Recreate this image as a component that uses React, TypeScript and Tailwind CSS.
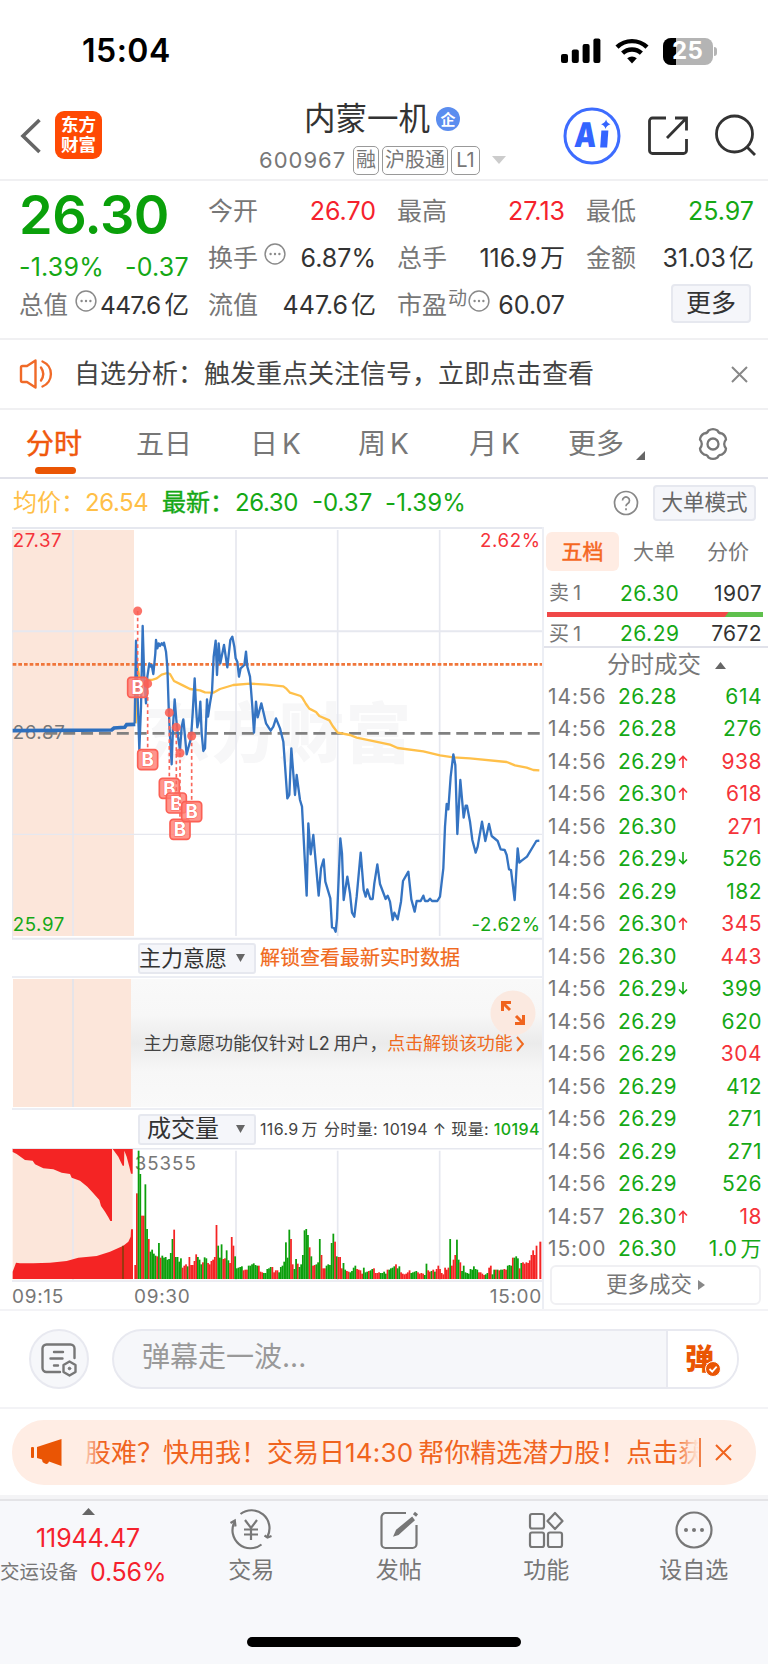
import type { ReactNode } from "react";
import clsx from "clsx";

const FONT = "font-['Inter','Noto_Sans_CJK_SC',sans-serif]";

type Trade = { time: string; price: string; dir?: "up" | "down"; vol: string; red?: boolean };

const trades: Trade[] = [
  { time: "14:56", price: "26.28", vol: "614" },
  { time: "14:56", price: "26.28", vol: "276" },
  { time: "14:56", price: "26.29", dir: "up", vol: "938", red: true },
  { time: "14:56", price: "26.30", dir: "up", vol: "618", red: true },
  { time: "14:56", price: "26.30", vol: "271", red: true },
  { time: "14:56", price: "26.29", dir: "down", vol: "526" },
  { time: "14:56", price: "26.29", vol: "182" },
  { time: "14:56", price: "26.30", dir: "up", vol: "345", red: true },
  { time: "14:56", price: "26.30", vol: "443", red: true },
  { time: "14:56", price: "26.29", dir: "down", vol: "399" },
  { time: "14:56", price: "26.29", vol: "620" },
  { time: "14:56", price: "26.29", vol: "304", red: true },
  { time: "14:56", price: "26.29", vol: "412" },
  { time: "14:56", price: "26.29", vol: "271" },
  { time: "14:56", price: "26.29", vol: "271" },
  { time: "14:56", price: "26.29", vol: "526" },
  { time: "14:57", price: "26.30", dir: "up", vol: "18", red: true },
  { time: "15:00", price: "26.30", vol: "1.0万" },
];

// chart data, 3 units per pixel
const preLine = "38,632 335,630 342,624 374,622 380,614 406,613";
const priceLine =
  "404,610 408,362 411,470 418,690 423,560 428,318 433,480 438,550 442,470 448,430 452,440 455,435 460,462 466,400 468,360 472,385 476,370 480,378 485,370 490,376 492,368 498,395 502,440 506,560 510,650 515,733 519,620 524,538 529,600 534,650 540,690 545,620 550,598 555,650 560,703 566,680 573,655 578,580 584,475 588,560 592,622 597,600 601,545 605,640 610,693 615,685 621,538 624,590 630,550 636,515 641,410 647,362 651,465 656,370 661,430 672,375 682,442 691,360 697,350 703,380 707,415 712,425 717,470 722,445 733,435 738,395 742,440 750,470 757,560 762,638 768,545 773,592 784,550 798,610 812,632 820,620 828,595 840,625 850,665 862,835 868,825 874,685 885,825 890,765 900,840 906,860 920,1127 925,910 932,1003 940,945 956,1127 963,1045 971,1018 976,1085 991,1135 996,1222 1002,1224 1007,1235 1011,1195 1021,955 1026,1000 1031,1140 1042,1070 1050,1120 1056,1178 1063,1190 1070,1130 1082,998 1091,1110 1097,1130 1102,1108 1111,1137 1118,1137 1123,1090 1132,1033 1140,1092 1157,1137 1163,1127 1170,1145 1178,1200 1183,1178 1193,1198 1203,1145 1209,1083 1225,1055 1234,1138 1244,1175 1250,1143 1262,1143 1270,1127 1275,1143 1284,1143 1290,1136 1296,1143 1312,1143 1320,1130 1330,1045 1335,920 1340,852 1345,868 1352,770 1360,703 1366,735 1372,942 1381,780 1391,893 1397,857 1401,857 1410,905 1417,960 1427,998 1433,980 1446,905 1456,963 1467,912 1475,948 1493,963 1502,988 1514,990 1520,1005 1527,1048 1533,1050 1544,1140 1553,985 1558,1028 1565,1022 1581,1010 1609,963 1618,962";
const avgLine =
  "407,610 410,560 413,440 418,470 430,480 455,480 470,475 485,464 502,459 510,462 522,483 550,497 570,507 600,511 615,517 640,518 660,507 700,495 750,491 800,494 850,499 858,505 870,518 902,528 908,535 918,552 928,566 948,576 958,588 988,601 998,618 1013,638 1050,645 1070,653 1170,674 1193,684 1270,694 1320,706 1360,712 1410,715 1520,726 1545,736 1580,743 1600,750 1618,751";

const marks = [
  { x: 413, y: 273, b: 502 },
  { x: 443, y: 491, b: 719 },
  { x: 508, y: 578, b: 805 },
  { x: 529, y: 622, b: 849 },
  { x: 540, y: 699, b: 928 },
  { x: 575, y: 648, b: 875 },
];

const volume =
  "r42 r257 g385 g315 r190 r190 g284 g150 r120 g82 g88 g76 g70 r68 g108 r64 g70 g64 g66 g58 g60 g78 g120 r148 g66 g66 g52 g62 r34 r40 r44 g38 r66 r42 r42 r54 r74 g66 g58 g44 r50 g65 g62 r48 r44 r54 r58 r66 r162 g100 g64 g104 r60 r62 g86 g56 r48 r126 r100 g68 g32 g34 g36 g38 r26 r28 r28 g40 g40 g44 g47 g42 g40 r40 " +
  "r22 r20 g18 g18 g30 g32 g36 r36 r20 r26 r26 g20 g36 g40 g52 g110 g64 g148 r120 r44 g30 g60 r46 g36 g44 g72 g146 g150 g132 r95 g68 r40 r42 g44 g50 g120 r72 r32 r32 g40 g44 g42 g108 g136 r112 g68 r66 r66 r32 g48 g28 r24 r22 g20 g24 g34 g40 r30 r28 r26 r16 g34 g20 g22 r24 g26 g30 r32 r18 r18 r20 g18 g18 g22 g16 r28 g28 g32 g34 g38 r44 g32 g38 r20 r16 r14 r16 r20 r26 g18 g20 g22 g24 r20 r16 r18 r16 g12 g46 r26 r22 g24 r28 g22 r30 r40 r30 r18 r14 r34 r28 r34 g120 r40 r58 r72 g118 g58 r50 g24 g40 g20 g18 g16 g30 g28 g38 g30 g28 r20 r20 r16 r12 g14 g18 r34 r40 g14 g28 r28 g28 r26 g28 g28 r30 r28 g40 g42 g40 r64 g64 g68 g62 r32 g48 r50 r46 r50 r48 r56 r72 r86 r72 r100";

const bars = volume.split(" ");

function Dots({ className }: { className?: string }) {
  return (
    <svg viewBox="0 0 24 24" fill="none" stroke="#8a8a8a" strokeWidth="1.6" className={clsx("shrink-0", className)}>
      <circle cx="12" cy="12" r="10.8" />
      <g fill="#8a8a8a" stroke="none">
        <circle cx="7.2" cy="12" r="1.3" />
        <circle cx="12" cy="12" r="1.3" />
        <circle cx="16.8" cy="12" r="1.3" />
      </g>
    </svg>
  );
}

function StatusBar() {
  return (
    <div className="flex h-[90px] items-center pt-[12px] pr-[51px] pl-[82px]">
      <span className="flex-1 text-[32px] leading-none font-semibold tracking-[0.5px] text-black">15:04</span>
      <svg width="40" height="26" viewBox="0 0 40 26" className="mr-[14px]">
        <rect x="0" y="16" width="7" height="9" rx="2" />
        <rect x="10.8" y="11.5" width="7" height="13.5" rx="2" />
        <rect x="21.6" y="6" width="7" height="19" rx="2" />
        <rect x="32.4" y="0.5" width="7" height="24.5" rx="2" />
      </svg>
      <svg width="34" height="26" viewBox="0 0 34 26" fill="none" stroke="#000" strokeWidth="4.4" className="mr-[14px]">
        <path d="M2 9.2a21.5 21.5 0 0 1 30 0" />
        <path d="M7.6 15.2a13.6 13.6 0 0 1 18.8 0" />
        <path d="M17 25.5l-4.8-5.2a7 7 0 0 1 9.6 0z" fill="#000" stroke="none" />
      </svg>
      <div className="relative flex h-[27px] w-[50px] items-center justify-center overflow-hidden rounded-[8px] bg-[#b4b4b4]">
        <span className="absolute inset-y-0 left-0 w-[13px] bg-black" />
        <span className="relative text-[24px] leading-none font-bold tracking-[0.2px] text-white">25</span>
      </div>
      <span className="ml-[1.5px] h-[9px] w-[3px] rounded-r-full bg-[#b4b4b4]" />
    </div>
  );
}

function Tag({ children, className }: { children: ReactNode; className?: string }) {
  return (
    <span
      className={clsx(
        "flex h-[29px] items-center justify-center rounded-[5px] border-[1.5px] border-[#999] text-[20px] leading-none text-[#777]",
        className
      )}
    >
      {children}
    </span>
  );
}

function Header() {
  return (
    <header className="flex h-[91px] items-start border-b-2 border-[#f0f0f2] pl-[20px]">
      <svg width="22" height="36" viewBox="0 0 22 36" fill="none" stroke="#666" strokeWidth="3.6" className="mt-[28px]">
        <path d="M19.5 2L3 18l16.500 16" />
      </svg>
      <div className="mt-[21px] ml-[13px] flex h-[48px] w-[47px] flex-col items-center justify-center rounded-[9px] bg-[#ff4a04] text-[17.500px] leading-[20px] font-bold text-white">
        <span>东方</span>
        <span>财富</span>
      </div>
      <div className="ml-[157px] flex w-[248px] flex-col">
        <div className="mt-[12px] ml-[45px] flex h-[34px] items-center">
          <span className="text-[31.500px] leading-none text-[#333]">内蒙一机</span>
          <span className="ml-[6px] flex h-[24px] w-[24px] items-center justify-center rounded-full bg-[#5b8def] text-[15px] leading-none font-bold text-white">
            企
          </span>
        </div>
        <div className="mt-[9px] flex h-[30px] items-center">
          <span className="w-[94px] text-[22px] leading-none tracking-[1px] text-[#777]">600967</span>
          <Tag className="w-[26px]">融</Tag>
          <Tag className="ml-[3px] w-[66px]">沪股通</Tag>
          <Tag className="ml-[3px] w-[29px]">L1</Tag>
          <svg width="14" height="8" viewBox="0 0 14 8" className="ml-[12px]">
            <path d="M0 0h14L7 8z" fill="#ccc" />
          </svg>
        </div>
      </div>
      <svg width="58" height="58" viewBox="0 0 58 58" className="mt-[17px] ml-[56px]">
        <circle cx="29" cy="29" r="27" fill="none" stroke="#3d6cff" strokeWidth="3" />
        <g fill="#3464ff" transform="skewX(-4) translate(2.500 0)">
          <text x="11" y="40.500" fontSize="34" fontWeight="900" textLength="22" lengthAdjust="spacingAndGlyphs">
            A
          </text>
          <path d="M37.500 23.500h7v17h-7z" />
          <path d="M41.500 12.500q1 3.800 4.700 4.800-3.700 1-4.700 4.800-1-3.800-4.700-4.800 3.700-1 4.700-4.800z" />
        </g>
      </svg>
      <svg width="42" height="42" viewBox="0 0 42 42" fill="none" stroke="#333" strokeWidth="2.8" className="mt-[25px] ml-[26px]">
        <path d="M19 3H5.500a3 3 0 0 0-3 3v29.500a3 3 0 0 0 3 3h31a3 3 0 0 0 3-3V24" />
        <path d="M28 3h11.500v12.500M39 3.500L20 23" />
      </svg>
      <svg width="44" height="44" viewBox="0 0 44 44" fill="none" stroke="#333" strokeWidth="2.8" className="mt-[24px] ml-[25px]">
        <circle cx="20.500" cy="20" r="18" />
        <path d="M32.500 32.500l8.500 8.500" />
      </svg>
    </header>
  );
}

type Quote = { label: string; value: string; unit?: string; color?: string; dots?: boolean };

function QuoteCell({ label, value, unit, color = "text-[#333]", dots }: Quote) {
  return (
    <div className="flex h-[47px] w-[168px] items-center text-[25px] leading-none">
      <span className="text-[#777]">{label}</span>
      {dots && <Dots className="-mt-[10px] ml-[6px] h-[22px] w-[22px]" />}
      <span className={clsx("ml-auto", color)}>{value}</span>
      {unit && <span className={clsx("ml-[3px]", color)}>{unit}</span>}
    </div>
  );
}

function QuotePanel() {
  return (
    <section className="flex h-[159px] border-b-2 border-[#f0f0f2] pl-[19px]">
      <div className="w-[189px]">
        <div className="mt-[7px] h-[54px] text-[54px] leading-[54px] font-semibold tracking-[-0.5px] text-[#0aa00a]">26.30</div>
        <div className="mt-[12px] flex h-[26px] items-center text-[25px] leading-none tracking-[0.2px] text-[#15a815]">
          <span className="w-[106px]">-1.39%</span>
          <span>-0.37</span>
        </div>
        <div className="mt-[2px] flex h-[47px] items-center text-[24.500px] leading-none">
          <span className="text-[#777]">总值</span>
          <Dots className="-mt-[10px] ml-[7px] h-[22px] w-[22px]" />
          <span className="ml-[3px] tracking-[-0.7px] text-[#333]">447.6</span>
          <span className="ml-[4px] text-[#333]">亿</span>
        </div>
      </div>
      <div className="flex flex-col pt-[7px]">
        <div className="flex gap-[21px]">
          <QuoteCell label="今开" value="26.70" color="text-[#f5222d]" />
          <QuoteCell label="最高" value="27.13" color="text-[#f5222d]" />
          <QuoteCell label="最低" value="25.97" color="text-[#15a815]" />
        </div>
        <div className="flex gap-[21px]">
          <QuoteCell label="换手" value="6.87%" dots />
          <QuoteCell label="总手" value="116.9" unit="万" />
          <QuoteCell label="金额" value="31.03" unit="亿" />
        </div>
        <div className="flex gap-[21px]">
          <QuoteCell label="流值" value="447.6" unit="亿" />
          <div className="flex h-[47px] w-[168px] items-center text-[25px] leading-none">
            <span className="text-[#777]">市盈</span>
            <span className="-mt-[14px] ml-px text-[19px] text-[#777]">动</span>
            <Dots className="-mt-[10px] ml-[1px] h-[22px] w-[22px]" />
            <span className="ml-auto text-[#333]">60.07</span>
          </div>
          <div className="flex h-[47px] w-[165px] items-center justify-end">
            <button className="mt-[-4px] flex h-[39px] w-[80px] items-center justify-center rounded-[4px] border-2 border-[#e6e8ef] bg-[#f5f6fa] text-[25px] leading-none text-[#333]">
              更多
            </button>
          </div>
        </div>
      </div>
    </section>
  );
}

function Notice() {
  return (
    <section className="flex h-[70px] items-center border-b-2 border-[#f0f0f2] pl-[19px]">
      <svg width="36" height="30" viewBox="0 0 36 30" fill="none" stroke="#f06a28" strokeWidth="2.4" strokeLinejoin="round">
        <path d="M2 8.500v13a1.500 1.500 0 0 0 1.500 1.500H8l8.500 5.500V1.500L8 7H3.500A1.500 1.500 0 0 0 2 8.500z" />
        <path d="M22 8.500q4.500 6.500 0 13M23.500 2.500a13.500 13.500 0 0 1 0 25" strokeLinecap="round" />
      </svg>
      <span className="ml-[19px] text-[26px] leading-none text-[#444]">自选分析：触发重点关注信号，立即点击查看</span>
      <svg width="17" height="17" viewBox="0 0 17 17" stroke="#888" strokeWidth="2" className="ml-auto mr-[20px]">
        <path d="M1 1l15 15M16 1L1 16" />
      </svg>
    </section>
  );
}

function Tabs() {
  return (
    <nav className="flex h-[69px] border-b-2 border-[#e1e2ea] text-[28px] leading-none text-[#777]">
      <div className="ml-[26px] flex w-[110px] flex-col">
        <span className="mt-[20px] text-[#f0580c] [-webkit-text-stroke:0.5px]">分时</span>
        <span className="mt-[9px] ml-[8.500px] h-[7px] w-[41px] rounded-full bg-[#ea5504]" />
      </div>
      <span className="mt-[20px] w-[114px]">五日</span>
      <span className="mt-[20px] w-[108px]">日<span className="ml-[4px]">K</span></span>
      <span className="mt-[20px] w-[111px]">周<span className="ml-[4px]">K</span></span>
      <span className="mt-[20px] w-[99px]">月<span className="ml-[4px]">K</span></span>
      <span className="mt-[20px]">更多</span>
      <svg width="9" height="9" viewBox="0 0 9 9" className="mt-[41px] ml-[12px]">
        <path d="M9 0v9H0z" fill="#666" />
      </svg>
      <svg width="34" height="34" viewBox="0 0 34 34" fill="none" stroke="#777" strokeWidth="2.300" strokeLinejoin="round" className="mt-[17px] ml-[51px]">
        <path d="M12.500 3.500q4.500-2.800 9 0 1 2.800 4.200 2.900 4 2 4.300 6.200-1.800 2.200-1.800 4.400t1.800 4.400q-.3 4.200-4.300 6.200-3.200.1-4.200 2.900-4.500 2.800-9 0-1-2.800-4.200-2.900-4-2-4.300-6.200 1.800-2.200 1.800-4.400t-1.800-4.400q.3-4.200 4.300-6.200 3.200-.1 4.200-2.900z" />
        <circle cx="17" cy="17" r="5.500" />
      </svg>
    </nav>
  );
}

function Legend() {
  return (
    <div className="flex h-[48px] items-center pl-[13px] text-[24px] leading-none text-[#15a815]">
      <span className="w-[72px] text-[#ffbf47]">均价：</span>
      <span className="w-[77px] tracking-[-0.4px] text-[#ffbf47]">26.54</span>
      <span className="w-[73px] [-webkit-text-stroke:0.4px]">最新：</span>
      <span className="w-[77px] tracking-[-0.4px]">26.30</span>
      <span className="w-[73px]">-0.37</span>
      <span className="tracking-[0.1px]">-1.39%</span>
      <svg width="26" height="26" viewBox="0 0 26 26" fill="none" stroke="#888" strokeWidth="1.700" className="ml-auto">
        <circle cx="13" cy="13" r="11.500" />
        <path d="M9.500 10.500a3.500 3.500 0 1 1 5.300 3q-1.800 1-1.800 2.800M13 18.200v2" />
      </svg>
      <button className="mr-[12px] ml-[14px] flex h-[36px] w-[103px] items-center justify-center rounded-[4px] border-2 border-[#e6e8ef] bg-[#f5f6fa] text-[21.500px] leading-none text-[#666]">
        大单模式
      </button>
    </div>
  );
}

function PriceChart() {
  return (
    <svg width="530" height="413" viewBox="36 21 1590 1239" className="block text-[56px]">
      <rect x="38" y="30" width="364" height="1218" fill="#fce6da" />
      <text x="434" y="710" fontSize="196" fontWeight="900" fill="#f7f7f8" letterSpacing="5">
        东方财富
      </text>
      <g stroke="#e6e8ef" strokeWidth="6">
        <path d="M36 24H1626M36 334H1626M36 1256H1626" />
        <path d="M36 943H1626" strokeWidth="4" />
        <path d="M219 30V1248M708 30V1248M1013 30V1248M1319 30V1248" strokeWidth="5" />
        <path d="M38 30V1256" strokeWidth="3" />
      </g>
      <path d="M38 433H1626" stroke="#f0763a" strokeWidth="8" strokeDasharray="11 6" />
      <text x="38" y="658" fill="#777" letterSpacing="2">26.87</text>
      <path d="M136 640H1620" stroke="#808080" strokeWidth="8" strokeDasharray="36 17.600" />
      <polyline points={avgLine} fill="none" stroke="#ffc04a" strokeWidth="7" strokeLinejoin="round" />
      <polyline points={preLine} fill="none" stroke="#2d6fbe" strokeWidth="11" />
      <polyline points={priceLine} fill="none" stroke="#3574c2" strokeWidth="7" strokeLinejoin="round" />
      {marks.map((m) => (
        <g key={m.x}>
          <path d={`M${m.x} ${m.y}V${m.b - 30}`} stroke="#f9665a" strokeWidth="5" strokeDasharray="11 9" />
          <rect x={m.x - 30} y={m.b - 30} width="60" height="60" rx="10" fill="#ff7c70" fillOpacity="0.8" stroke="#fb6055" strokeWidth="5" />
          <text x={m.x} y={m.b + 20} textAnchor="middle" fontSize="56" fontWeight="700" fill="#fff" stroke="#fb6055" strokeWidth="3" paintOrder="stroke">
            B
          </text>
        </g>
      ))}
      {marks.map((m) => (
        <circle key={m.x} cx={m.x} cy={m.y} r="13.500" fill="#fa6054" fillOpacity="0.88" />
      ))}
      <g letterSpacing="1.800">
        <text x="38" y="81" fill="#f5333a">27.37</text>
        <text x="38" y="1233" fill="#15a815">25.97</text>
        <text x="1622" y="81" textAnchor="end" fill="#f5333a">2.62%</text>
        <text x="1622" y="1233" textAnchor="end" fill="#15a815">-2.62%</text>
      </g>
    </svg>
  );
}

function Picker({ children, className }: { children: ReactNode; className?: string }) {
  return (
    <button
      className={clsx(
        "ml-[126px] flex h-[31px] w-[118px] shrink-0 items-center rounded-[3px] border-2 border-[#e6e8ef] bg-[#f5f6fa] leading-none text-[#333]",
        className
      )}
    >
      {children}
      <svg width="9" height="8" viewBox="0 0 9 8" className="mr-[9px] ml-auto">
        <path d="M0 0h9L4.500 8z" fill="#666" />
      </svg>
    </button>
  );
}

function IntentPanel() {
  return (
    <div>
      <div className="flex h-[36px] items-center">
        <Picker className="text-[22px]"><span className="-ml-px">主力意愿</span></Picker>
        <span className="ml-[4px] text-[20px] leading-none text-[#f06a20] [-webkit-text-stroke:0.2px]">解锁查看最新实时数据</span>
      </div>
      <div className="flex h-[134px] border-y-2 border-[#eceef4] pt-px pb-px">
        <div className="ml-[0.500px] h-full w-[61px] border-r-2 border-[#e6e4e8] bg-[#fce6da]" />
        <div className="h-full w-[57px] bg-[#fce6da]" />
        <div className="relative flex flex-1 items-center bg-[linear-gradient(#f9f9f9_0%,#f7f7f7_28%,#ebebeb_50%,#f7f7f7_72%,#f9f9f9_100%)] pt-[2px] pl-[13px] text-[18px] leading-none tracking-[-0.1px]">
          <svg width="46" height="46" viewBox="0 0 46 46" fill="none" stroke="#f0641e" strokeWidth="3" className="absolute top-[11px] right-[6px]">
            <circle cx="23" cy="23" r="22.500" fill="#fbe9e0" stroke="none" />
            <path d="M12.500 21V12.500H21M13 13l7 7M33.500 25v8.500H25M33 33l-7-7" />
          </svg>
          <span className="relative text-[#444]">主力意愿功能仅针对<span className="mx-[4px]">L2</span>用户，</span>
          <span className="relative text-[#f06a20]">点击解锁该功能</span>
          <svg width="8" height="16" viewBox="0 0 8 16" fill="none" stroke="#f06a20" strokeWidth="2" className="relative ml-[3px]">
            <path d="M1 1l6 7-6 7" />
          </svg>
        </div>
      </div>
      <div className="flex h-[38px] items-center whitespace-nowrap">
        <Picker className="pl-[7px] text-[24px]">成交量</Picker>
        <span className="ml-[4px] text-[16px] leading-none tracking-[0.35px] text-[#444]">
          116.9<span className="mr-[6px] ml-[3px]">万</span>分时量: 10194 ↑ 现量: <span className="font-medium text-[#15a815]">10194</span>
        </span>
      </div>
    </div>
  );
}

function VolumeChart() {
  return (
    <svg width="530" height="134" viewBox="36 54 1590 402" className="block text-[56px]">
      <rect x="38" y="58" width="360" height="390" fill="#fce6da" />
      <g stroke="#e6e8ef" strokeWidth="5">
        <path d="M36 56H1626M36 453H1626" />
        <path d="M219 62V450M708 62V450M1013 62V450M1319 62V450" />
      </g>
      <g fill="#f42424">
        <path d="M38 57V66L50 72 75 90 98 92 105 103 130 115 160 118 185 128 210 132 215 143 240 152 262 170 280 190 298 210 303 228 315 245 325 262 331 273H336V57z" />
        <path d="M338 57L355 80 362 95 368 107H372L373 62 380 80 388 110 393 131H398V57z" />
        <path d="M38 447V425L48 398 60 400H100L150 398 200 393 235 383 290 378 330 365 370 347 385 335 392 320 393 298H399V447z" />
      </g>
      <path d="M369 347V447" stroke="#8a3c0c" strokeWidth="5" />
      <text x="404" y="119" fill="#777" letterSpacing="3">35355</text>
      {bars.map((b, i) => {
        const h = Number(b.slice(1));
        return (
          <rect key={i} x={403 + i * 5.080} y={447 - h} width="5.300" height={h} fill={b[0] === "r" ? "#f42424" : "#0c9f0c"} />
        );
      })}
      <rect x="1618" y="335" width="6" height="112" fill="#f42424" />
    </svg>
  );
}

function OrderBook() {
  return (
    <aside className="flex flex-1 flex-col border-l-2 border-[#eceef4] text-[21px] leading-none">
      <div className="mt-[5px] ml-[2px] flex h-[39px] items-center text-[#777]">
        <span className="flex h-full w-[73px] items-center justify-center rounded-[6px] bg-[#ffece3] text-[#f5671f] [-webkit-text-stroke:0.5px]">五档</span>
        <span className="ml-[14px]">大单</span>
        <span className="ml-[32px]">分价</span>
      </div>
      <div className="mt-[9px] mr-[6px] ml-[5px] flex h-[26px] items-center">
        <span className="w-[71px] text-[20px] text-[#777]">卖<span className="ml-[4px]">1</span></span>
        <span className="flex-1 tracking-[0.5px] text-[#15a815]">26.30</span>
        <span className="tracking-[0.4px] text-[#333]">1907</span>
      </div>
      <div className="mt-[6px] ml-[2.500px] flex h-[5px] w-[216px] bg-[#5fc04d]">
        <span className="w-[182px] bg-[#f04848] [clip-path:polygon(0_0,100%_0,98%_100%,0_100%)]" />
      </div>
      <div className="mt-[4px] mr-[6px] ml-[5px] flex h-[25px] items-center">
        <span className="w-[71px] text-[20px] text-[#777]">买<span className="ml-[4px]">1</span></span>
        <span className="flex-1 tracking-[0.5px] text-[#15a815]">26.29</span>
        <span className="tracking-[0.4px] text-[#333]">7672</span>
      </div>
      <div className="flex h-[34px] items-center border-t-2 border-[#e1e2ea] pt-[2px] pl-[63px] text-[23.500px] text-[#777]">
        分时成交
        <svg width="11" height="7" viewBox="0 0 11 7" className="ml-[14px]">
          <path d="M0 7h11L5.500 0z" fill="#666" />
        </svg>
      </div>
      <div className="mr-[6px] ml-[4px]">
        {trades.map((t, i) => (
          <div key={i} className="flex h-[32.500px] items-center">
            <span className="w-[70px] tracking-[0.9px] text-[#777]">{t.time}</span>
            <span className="tracking-[0.4px] text-[#15a815]">{t.price}</span>
            {t.dir && (
              <svg
                width="10"
                height="13"
                viewBox="0 0 10 13"
                fill="none"
                stroke={t.dir === "up" ? "#f5333a" : "#15a815"}
                strokeWidth="1.600"
                className="ml-px"
              >
                <path d={t.dir === "up" ? "M5 13V1.500M1 5.500l4-4 4 4" : "M5 0v11.500M1 7.500l4 4 4-4"} />
              </svg>
            )}
            <span className={clsx("ml-auto tracking-[0.5px]", t.red ? "text-[#f5333a]" : "text-[#15a815]")}>
              {t.vol.replace("万", "")}
              {t.vol.endsWith("万") && <span className="ml-[3px]">万</span>}
            </span>
          </div>
        ))}
      </div>
      <button className="ml-[6px] flex h-[40px] w-[211px] items-center justify-center rounded-[6px] border-2 border-[#f0f0f3] text-[21.500px] text-[#777]">
        更多成交
        <svg width="7" height="10" viewBox="0 0 7 10" className="ml-[6px]">
          <path d="M0 0v10l7-5z" fill="#888" />
        </svg>
      </button>
    </aside>
  );
}

function CommentBar() {
  return (
    <section className="flex h-[100px] items-center border-y-2 border-[#f3f3f6] pl-[29px]">
      <div className="flex h-[60px] w-[60px] items-center justify-center rounded-full border-2 border-[#e8e9f0] bg-[#f6f7fa]">
        <svg width="36" height="34" viewBox="0 0 36 34" fill="none" stroke="#777" strokeWidth="2.400" strokeLinecap="round" strokeLinejoin="round" className="mt-px">
          <path d="M19 29H5.500a4 4 0 0 1-4-4V5.500a4 4 0 0 1 4-4h24a4 4 0 0 1 4 4V15" />
          <path d="M13 9h9M9.500 15.500h12M13 22.500h4" />
          <path d="M28.500 18.500l6 3.500v7l-6 3.500-6-3.500v-7z" />
          <circle cx="28.500" cy="25.500" r="1.300" fill="#777" strokeWidth="1" />
        </svg>
      </div>
      <div className="ml-[23px] flex h-[60px] w-[627px] items-center overflow-hidden rounded-full border-2 border-[#e8e9f0] bg-[#f6f7fa]">
        <span className="-mt-[4px] flex-1 pl-[28px] text-[28px] leading-none text-[#999]">弹幕走一波...</span>
        <div className="flex h-full w-[71px] items-center border-l-2 border-[#e8e9f0] bg-white pl-[17px]">
          <span className="text-[29px] leading-none font-black text-[#ea5504]">弹</span>
          <svg width="16" height="16" viewBox="0 0 16 16" className="mt-[20px] -ml-[9px]">
            <circle cx="8" cy="8" r="7.500" fill="#ea5504" stroke="#fff" strokeWidth="1" />
            <path d="M4.500 8l2.700 2.700 4.500-5" fill="none" stroke="#fff" strokeWidth="1.800" />
          </svg>
        </div>
      </div>
    </section>
  );
}

function Promo() {
  return (
    <section className="flex h-[86px] items-center">
      <div className="mt-px ml-[12px] flex h-[65px] w-[744px] items-center rounded-[32px] bg-[#ffede4] pl-[19px]">
        <svg width="32" height="28" viewBox="0 0 32 28" fill="#ea5504">
          <rect x="0" y="8" width="3" height="11" rx="1" />
          <path d="M6 8L30.500 0v27L18 22.500q-1 4-5 1.500-2-1-2-3.500L6 19z" />
        </svg>
        <div className="relative ml-[17px] w-[619px] overflow-hidden py-[3px] pl-[5px] text-[26px] leading-none whitespace-nowrap text-[#f0641e]">
          股难？快用我！交易日<span className="tracking-[0.2px]">14:30</span>
          <span className="ml-[5px]">帮你精选潜力股！点击获</span>
          <span className="absolute inset-y-0 left-0 w-[22px] bg-linear-to-r from-[#ffede4] to-transparent" />
          <span className="absolute inset-y-0 right-0 w-[24px] bg-linear-to-r from-transparent to-[#ffede4]" />
        </div>
        <span className="h-[29px] w-[2px] bg-[#f08048]" />
        <svg width="17" height="17" viewBox="0 0 17 17" stroke="#f0641e" strokeWidth="2" className="ml-[14px]">
          <path d="M1 1l15 15M16 1L1 16" />
        </svg>
      </div>
    </section>
  );
}

const iconProps = {
  width: 42,
  height: 42,
  viewBox: "0 0 42 42",
  fill: "none",
  stroke: "#777",
  strokeWidth: 2.2,
};

function NavItem({ label, children }: { label: string; children: ReactNode }) {
  return (
    <div className="flex w-[147.500px] flex-col items-center">
      {children}
      <span className="mt-[8px] text-[23px] leading-none text-[#777]">{label}</span>
    </div>
  );
}

function BottomNav() {
  return (
    <footer className="flex h-[169px] flex-col border-t-4 border-[#f4f4f6] bg-[#f7f8fb]">
      <div className="flex h-[138px] border-t-2 border-[#e4e4e7] pt-[8px]">
        <div className="flex w-[177.500px] flex-col text-[25px] leading-none text-[#f5222d]">
          <svg width="13" height="7" viewBox="0 0 13 7" className="-mt-px ml-[82px]">
            <path d="M0 7h13L6.500 0z" fill="#666" />
          </svg>
          <span className="mt-[11px] ml-[36px] tracking-[-0.1px]">11944.47</span>
          <span className="mt-[9px] flex items-center">
            <span className="w-[90px] text-[19.500px] text-[#777]">交运设备</span>
            <span className="tracking-[-0.2px]">0.56%</span>
          </span>
        </div>
        <NavItem label="交易">
          <svg {...iconProps}>
            <path d="M10.500 5A18 18 0 0 1 37.500 27.500M31.500 35.500A18 18 0 0 1 4.500 13" />
            <path d="M0.500 14l4.300-2.500.7 6M34.500 26.500l3 2 4-1.500" />
            <path d="M15 11l6 8 6-8M21 19v12M14 20.500h14M14 25.500h14" />
          </svg>
        </NavItem>
        <NavItem label="发帖">
          <svg {...iconProps}>
            <path d="M28 4H7.500a4 4 0 0 0-4 4v27a4 4 0 0 0 4 4h27a4 4 0 0 0 4-4V16" />
            <path d="M17 26l2-4.500L34 9l1.500 2L20 25z" fill="#777" />
            <path d="M36.500 6.500l2-2.500" strokeWidth="4" />
          </svg>
        </NavItem>
        <NavItem label="功能">
          <svg {...iconProps} strokeLinejoin="round">
            <rect x="5" y="5" width="14" height="14.500" rx="2" />
            <rect x="5" y="23.500" width="14" height="14.500" rx="2" />
            <rect x="23" y="23.500" width="14" height="14.500" rx="2" />
            <path d="M30 4l7.500 8-7.500 8-7.500-8z" />
          </svg>
        </NavItem>
        <NavItem label="设自选">
          <svg {...iconProps}>
            <circle cx="21" cy="21" r="17.500" />
            <g fill="#777" stroke="none">
              <circle cx="13" cy="21" r="2" />
              <circle cx="21" cy="21" r="2" />
              <circle cx="29" cy="21" r="2" />
            </g>
          </svg>
        </NavItem>
      </div>
      <div className="mx-auto h-[10px] w-[274px] rounded-full bg-black" />
    </footer>
  );
}

export default function App() {
  return (
    <div className={clsx("flex h-[1664px] w-[768px] flex-col overflow-hidden bg-white", FONT)}>
      <StatusBar />
      <Header />
      <QuotePanel />
      <Notice />
      <Tabs />
      <Legend />
      <main className="flex h-[782px]">
        <div className="ml-[12px] w-[530px] shrink-0">
          <PriceChart />
          <IntentPanel />
          <VolumeChart />
          <div className="flex h-[29px] items-center text-[19px] leading-none tracking-[0.7px] text-[#777]">
            <span className="w-[122px]">09:15</span>
            <span className="flex-1">09:30</span>
            <span>15:00</span>
          </div>
        </div>
        <OrderBook />
      </main>
      <CommentBar />
      <Promo />
      <BottomNav />
    </div>
  );
}
